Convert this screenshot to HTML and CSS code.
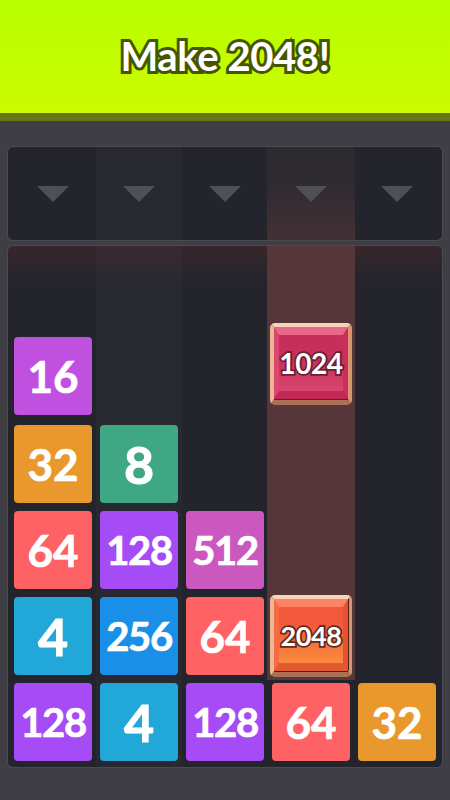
FILE: index.html
```html
<!DOCTYPE html>
<html lang="en">
<head>
<meta charset="utf-8">
<title>Make 2048!</title>
<link rel="stylesheet" href="styles.css">
</head>
<body>
<header class="banner"><h1>Make 2048!</h1></header>
<main class="play">
  <section class="droppers">
    <div class="dropper"><span class="arrow"></span></div>
    <div class="dropper alt"><span class="arrow"></span></div>
    <div class="dropper"><span class="arrow"></span></div>
    <div class="dropper active"><span class="arrow"></span></div>
    <div class="dropper"><span class="arrow"></span></div>
  </section>
  <section class="board">
    <div class="col">
      <div class="tile t128 n3">128</div>
      <div class="tile t4 n1">4</div>
      <div class="tile t64 n2">64</div>
      <div class="tile t32 n2">32</div>
      <div class="tile t16 n2">16</div>
    </div>
    <div class="col alt">
      <div class="tile t4 n1">4</div>
      <div class="tile t256 n3">256</div>
      <div class="tile t128 n3">128</div>
      <div class="tile t8 n1">8</div>
    </div>
    <div class="col">
      <div class="tile t128 n3">128</div>
      <div class="tile t64 n2">64</div>
      <div class="tile t512 n3">512</div>
    </div>
    <div class="col active">
      <div class="tile t64 n2">64</div>
      <div class="jewel j2048"><div class="face"><span>2048</span></div></div>
      <div class="jewel j1024 lifted"><div class="face"><span>1024</span></div></div>
    </div>
    <div class="col">
      <div class="tile t32 n2">32</div>
    </div>
    <div class="danger"></div>
  </section>
</main>
</body>
</html>
```
FILE: styles.css
```css
* { box-sizing: border-box; }
html, body { margin: 0; height: 100%; }
body {
  width: 450px;
  height: 800px;
  overflow: hidden;
  background: #3e3e44;
  font-family: "Lato", "Noto Sans", sans-serif;
  display: flex;
  flex-direction: column;
}
.banner {
  height: 121px;
  flex: none;
  background: linear-gradient(#b6ff00, #cdfa00);
  border-bottom: 8px solid #6a7516;
  display: flex;
  align-items: center;
  justify-content: center;
}
.banner h1 {
  margin: 0 0 1px;
  font-size: 40px;
  font-weight: 700;
  line-height: 1;
  letter-spacing: -0.4px;
  color: #fff;
  -webkit-text-stroke: 6px #465600;
  paint-order: stroke fill;
}
.play {
  flex: 1;
  padding: 26px 8px 33px;
  display: flex;
  flex-direction: column;
  gap: 6px;
}
.droppers, .board {
  display: flex;
  padding: 0 2px;
  background: #24252c;
  border-radius: 5px;
  box-shadow: 0 0 0 1px #4a4a50;
  overflow: hidden;
  position: relative;
}
.droppers { height: 93px; flex: none; }
.board { flex: 1; }
.dropper {
  width: 86px;
  flex: none;
  display: flex;
  justify-content: center;
  padding-top: 39px;
}
.dropper.alt { background: #282930; }
.dropper.active { background: linear-gradient(#2d2b30 35%, #443035 100%); width: 88px; margin: 0 -1px; }
.arrow {
  width: 0;
  height: 0;
  border-left: 16px solid transparent;
  border-right: 16px solid transparent;
  border-top: 16px solid #4f5056;
}
.col {
  width: 86px;
  flex: none;
  display: flex;
  flex-direction: column-reverse;
  align-items: center;
  gap: 8px;
  padding-bottom: 6px;
}
.col.alt { background: #282930; }
.col.active {
  position: relative;
  z-index: 1;
  background: linear-gradient(#55373a, #55373a) top / 100% calc(100% - 87px) no-repeat;
  width: 88px;
  margin: 0 -1px;
}
.danger {
  position: absolute;
  left: 0;
  right: 0;
  top: 0;
  height: 36px;
  background: linear-gradient(rgba(190, 40, 40, 0.13), rgba(190, 40, 40, 0));
}
.tile {
  width: 78px;
  height: 78px;
  flex: none;
  border-radius: 4px;
  color: #fff;
  font-weight: 700;
  line-height: 78px;
  text-align: center;
  -webkit-text-stroke: 0.7px #fff;
}
.n1 { font-size: 52px; -webkit-text-stroke-width: 1px; }
.n2 { font-size: 44px; }
.n3 { font-size: 40px; letter-spacing: -1.4px; }
.t4 { background: #21a7d8; }
.t8 { background: #3fa784; }
.t16 { background: #bf50e0; }
.t32 { background: #e8982d; }
.t64 { background: #fe6264; }
.t128 { background: #a64cf6; }
.t256 { background: #1a8fe8; }
.t512 { background: #ca58bf; }
.t16 { margin-top: 2px; margin-bottom: 2px; }
.jewel {
  width: 82px;
  height: 82px;
  flex: none;
  margin: -2px 0;
  border-style: solid;
  border-width: 4px 4px 6px;
  border-color: #f8d3bb #d8966f #ad6f55 #ecb797;
  border-radius: 5px;
}
.lifted { margin-bottom: 184px; }
.face {
  height: 100%;
  border-style: solid;
  border-width: 8px 5px 8px 5px;
  display: flex;
  align-items: center;
  justify-content: center;
}
.face span {
  color: #fff;
  font-weight: 700;
  line-height: 1;
  -webkit-text-stroke: 3.5px #6a2030;
  paint-order: stroke fill;
  text-shadow: 0 1px 0 #6a2030;
  white-space: nowrap;
}
.j1024 .face {
  background: linear-gradient(#c62f5a 40%, #d9466f);
  border-color: #e9688a #c92e5c #c22a55 #dc4670;
  box-shadow: 0 1px 0 #5a2030;
}
.j1024 .face span { font-size: 28px; letter-spacing: -0.4px; }
.j2048 .face {
  background: linear-gradient(#f2583c 30%, #fb8c3e);
  border-color: #ff8466 #e8502f #e25a2f #f86a44;
  box-shadow: 0 1px 0 #4a2018, 1px 0 0 #4a2018;
}
.j2048 .face span { font-size: 27px; letter-spacing: -0.4px; -webkit-text-stroke-color: #5e2a20; text-shadow: 0 1px 0 #5e2a20; }
```
